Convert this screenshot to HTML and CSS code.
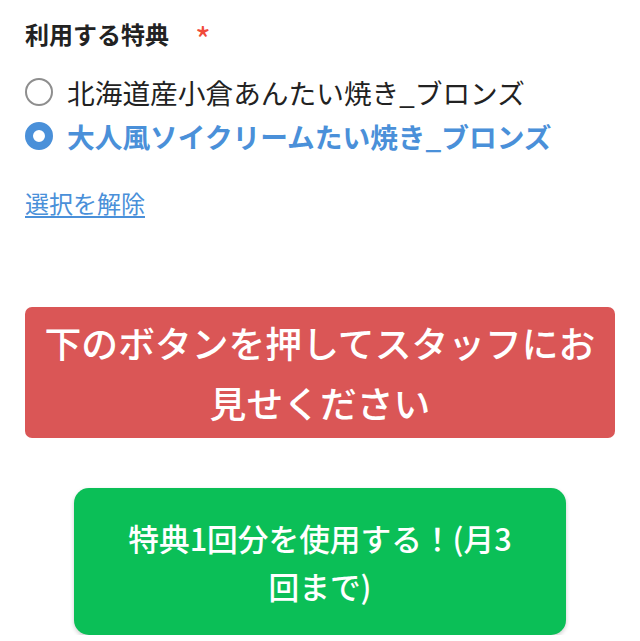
FILE: index.html
```html
<!DOCTYPE html>
<html lang="ja">
<head>
<meta charset="utf-8">
<link rel="stylesheet" href="styles.css">
</head>
<body>
<div class="page">
  <div class="field">
    <div class="label">利用する特典<span class="req">*</span></div>
    <div class="options">
      <label class="option">
        <span class="radio"></span>
        <span class="opt-text">北海道産小倉あんたい焼き_ブロンズ</span>
      </label>
      <label class="option checked">
        <span class="radio"></span>
        <span class="opt-text">大人風ソイクリームたい焼き_ブロンズ</span>
      </label>
    </div>
    <a class="clear" href="#">選択を解除</a>
  </div>
  <div class="notice">下のボタンを押してスタッフにお見せください</div>
  <div class="btn-wrap">
    <button class="use-btn">特典1回分を使用する！(月3回まで)</button>
  </div>
</div>
</body>
</html>
```

FILE: styles.css
```css
html, body {
  margin: 0;
  padding: 0;
  background: #ffffff;
}
body {
  font-family: "Noto Sans CJK JP", "Noto Sans", sans-serif;
  color: #222222;
}
.page {
  padding: 17px 25px 0 25px;
  display: flex;
  flex-direction: column;
}
.field {
  display: flex;
  flex-direction: column;
  align-items: flex-start;
}
.label {
  font-size: 24px;
  font-weight: 700;
  line-height: 34px;
  color: #222;
}
.req {
  color: #f04a3a;
  font-weight: 400;
  margin-left: 26px;
  font-size: 34px;
  line-height: 20px;
  vertical-align: -9px;
}
.options {
  margin-top: 21px;
  display: flex;
  flex-direction: column;
  gap: 4px;
}
.option {
  display: flex;
  align-items: center;
  gap: 14px;
  font-size: 27.7px;
  line-height: 40px;
  color: #222;
}
.radio {
  width: 28px;
  height: 28px;
  box-sizing: border-box;
  border-radius: 50%;
  border: 2.5px solid #8e8e8e;
  background: #fff;
  flex: none;
}
.option.checked {
  color: #4a90d9;
  font-weight: 700;
}
.option.checked .radio {
  border: 8px solid #4a90d9;
}
.clear {
  margin-top: 30px;
  font-size: 24px;
  line-height: 34px;
  color: #4a90d9;
  text-decoration: underline;
  text-underline-offset: 3px;
}
.notice {
  margin-top: 87px;
  background: #da5656;
  color: #fff;
  border-radius: 7px;
  font-size: 36.8px;
  font-weight: 500;
  line-height: 60px;
  text-align: center;
  padding: 5px 14px 6px;
}
.btn-wrap {
  margin-top: 50px;
  display: flex;
  justify-content: center;
}
.use-btn {
  width: 492px;
  height: 147px;
  border: none;
  border-radius: 15px;
  background: #0bbf57;
  color: #fff;
  font-family: "Noto Sans CJK JP", "Noto Sans", sans-serif;
  font-size: 30.7px;
  font-weight: 500;
  line-height: 48px;
  padding: 0 46px;
  box-shadow: 0 2px 4px rgba(0,0,0,0.2);
}
```
